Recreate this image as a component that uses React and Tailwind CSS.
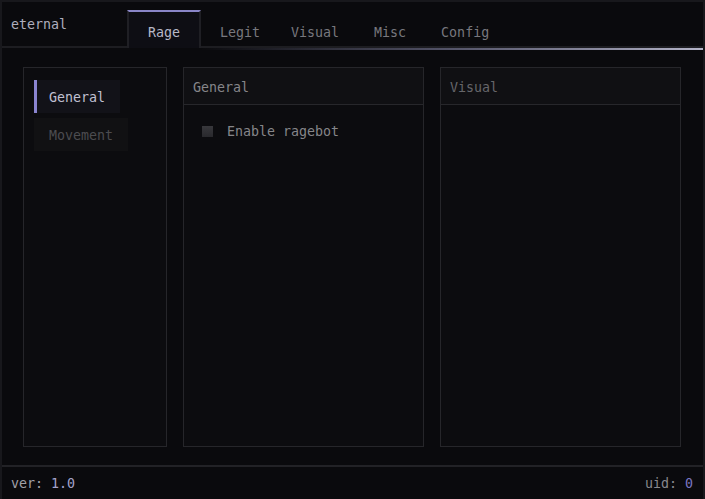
import React from 'react';

const TABS = [
  { label: 'Legit', ml: 'ml-[19px]' },
  { label: 'Visual', ml: 'ml-[31px]' },
  { label: 'Misc', ml: 'ml-[35px]' },
  { label: 'Config', ml: 'ml-[35px]' },
];

// ── Panel with header ─────────────────────────────────────────
function Panel({ title, titleColor, children }) {
  return (
    <div className="flex flex-col w-[241px] h-full bg-[#0c0c0f] border border-[#26262a]">
      <div className="h-[37px] flex items-center px-[9px] pt-[3px] bg-[#101013] border-b border-[#27272b]">
        <span className={titleColor}>{title}</span>
      </div>
      <div className="flex-1">{children}</div>
    </div>
  );
}

export default function App() {
  return (
    <div
      className="w-[705px] h-[499px] flex flex-col bg-[#0a0a0d] border-x-2 border-t-2 border-[#18181c] text-[13.3px] leading-none"
      style={{ fontFamily: '"DejaVu Sans Mono", "Liberation Mono", monospace' }}
    >
      {/* Header */}
      <div className="h-[46px] flex items-stretch relative">
        <div className="w-[125px] border-b-2 border-[#1d1d21] flex items-center pl-[9px] pt-[2px] text-[#aeaebe]">
          eternal
        </div>
        <div className="w-[74px] mt-[8px] border-t-2 border-[#8a86c8] border-x-2 border-x-[#1f1f24] bg-[#0e0e14] flex items-center justify-center pt-[6px] text-[#b8b8c8]">
          Rage
        </div>
        <div className="flex-1 flex items-center border-b-2 border-[#1d1d21] pt-[18px]">
          {TABS.map(t => (
            <span key={t.label} className={`${t.ml} text-[#78787e]`}>{t.label}</span>
          ))}
        </div>
        <div className="absolute left-[199px] right-0 bottom-[-2px] h-[2px] bg-gradient-to-r from-transparent via-[#55556a] to-[#b4b4c8]" />
      </div>

      {/* Content */}
      <div className="flex-1 flex gap-[16px] pl-[21px] pr-[20px] pt-[19px] pb-[18px] border-b-2 border-[#222226]">
        {/* Sidebar */}
        <div className="w-[144px] h-full bg-[#0c0c0f] border border-[#26262a] pt-[12px] pl-[10px] flex flex-col gap-[5px]">
          <div className="w-[86px] h-[33px] flex items-center pt-[2px] bg-[#121218] border-l-[3px] border-[#8a84d0] pl-[12px] text-[#c0c0d2]">
            General
          </div>
          <div className="w-[94px] h-[33px] flex items-center pt-[2px] bg-[#111113] pl-[15px] text-[#4c4c50]">
            Movement
          </div>
        </div>

        <Panel title="General" titleColor="text-[#86868a]">
          <div className="flex items-center pl-[18px] pt-[20px] gap-[14px]">
            <div className="w-[11px] h-[11px] bg-gradient-to-b from-[#38383c] to-[#29292d]" />
            <span className="text-[#86868a]">Enable ragebot</span>
          </div>
        </Panel>

        <Panel title="Visual" titleColor="text-[#66666a]" />
      </div>

      {/* Footer */}
      <div className="h-[32px] flex items-center justify-between pl-[9px] pr-[10px] pt-[1px]">
        <span>
          <span className="text-[#a0a0a8]">ver: </span>
          <span className="text-[#a4a4cc]">1.0</span>
        </span>
        <span>
          <span className="text-[#88888e]">uid: </span>
          <span className="text-[#7a76c2]">0</span>
        </span>
      </div>
    </div>
  );
}
